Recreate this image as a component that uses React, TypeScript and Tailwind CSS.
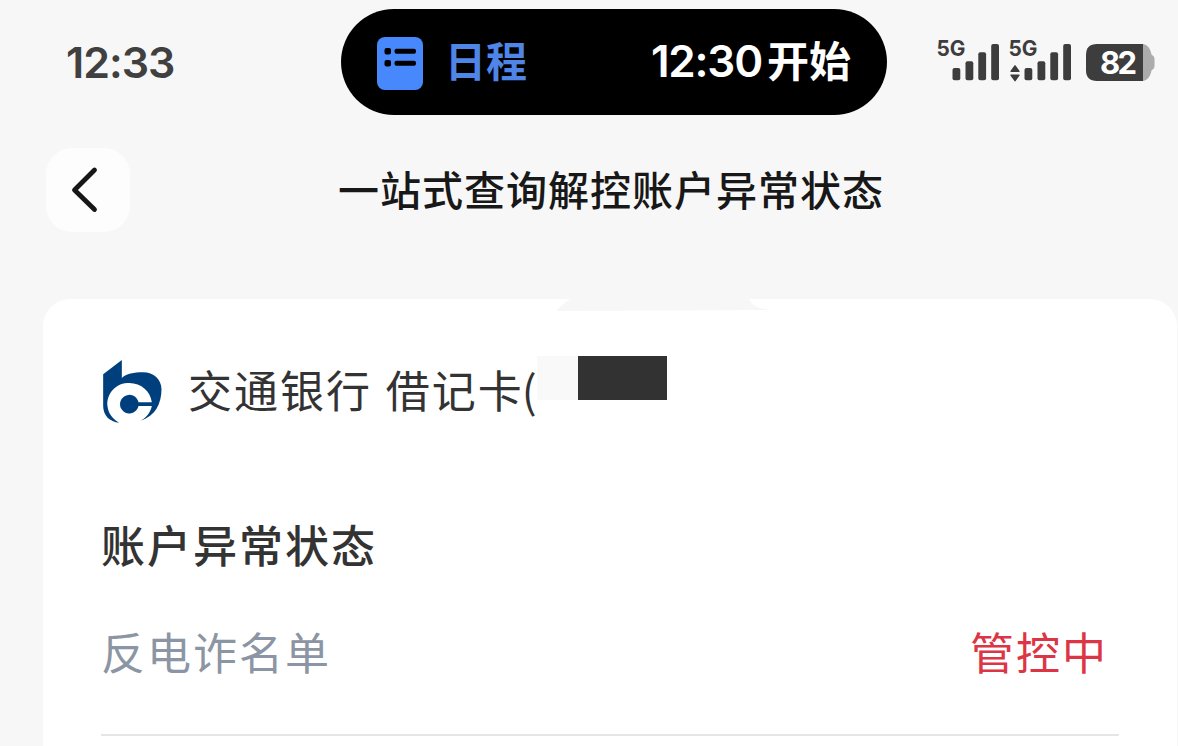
import React from 'react';

const BackIcon: React.FC<{ className?: string }> = ({ className }) => (
  <svg viewBox="0 0 84 84" fill="none" stroke="currentColor" className={className}>
    <path strokeWidth="4.8" strokeLinecap="round" strokeLinejoin="round" d="M48.5 22L28.5 42L48.5 61.5" />
  </svg>
);

const ScheduleIcon: React.FC<{ className?: string }> = ({ className }) => (
  <svg viewBox="0 0 46 53" className={className}>
    <rect width="46" height="53" rx="8" fill="#4888fd" />
    <g fill="#000">
      <rect x="7.5" y="11" width="6.5" height="6.5" rx="2" />
      <rect x="17.5" y="11.8" width="21.5" height="5" rx="2" />
      <rect x="7.5" y="23" width="6.5" height="6.5" rx="2" />
      <rect x="17.5" y="23.8" width="21.5" height="5" rx="2" />
    </g>
  </svg>
);

const SignalIcon: React.FC<{ className?: string; data?: boolean }> = ({ className, data }) => (
  <svg viewBox="-2 -10 66 54" fill="#3d3d3d" className={className}>
    <text x="-0.5" y="18" fontSize="21.5" fontWeight="700" textLength="29" lengthAdjust="spacingAndGlyphs" className="font-['Inter',sans-serif]">5G</text>
    {data && (
      <g stroke="#3d3d3d" strokeWidth="1.4" strokeLinejoin="round">
        <path d="M2 33.3L6 27.8L10 33.3Z" />
        <path d="M2 37.2L6 42.7L10 37.2Z" />
      </g>
    )}
    <rect x="15.5" y="30" width="7.8" height="12.3" rx="2" />
    <rect x="28.5" y="23.2" width="7.8" height="19.1" rx="2" />
    <rect x="41.3" y="14.2" width="7.8" height="28.1" rx="2" />
    <rect x="54.2" y="6" width="7.8" height="36.3" rx="2" />
  </svg>
);

const BatteryIcon: React.FC<{ className?: string }> = ({ className }) => (
  <svg viewBox="0 0 70 37" className={className}>
    <path d="M57 0C62 1 64.500 5 65.500 10.500L67.800 12.500Q68.500 13.500 68.500 15V22Q68.500 23.500 67.800 24.500L65.500 26.500C64.500 32 62 36 57 37Z" fill="#acacac" />
    <path d="M11 0H57V37H11Q0 37 0 26V11Q0 0 11 0Z" fill="#3d3d3d" />
    <text x="14" y="29.500" fontSize="31" fontWeight="700" fill="#fff" textLength="37" className="font-['Inter',sans-serif]">82</text>
  </svg>
);

const BankLogo: React.FC<{ className?: string }> = ({ className }) => (
  <svg viewBox="40 45 176 189" fill="#003f7d" className={className}>
    <path d="M96 45L40 88V182C40 212 60 230 88 233C68 222 56 206 53 184C49 152 72 117 112 114C152 111 182 138 186 172H146A28 28 0 1 0 146 183H186C182 201 172 216 153 227C196 214 215 176 215 133C215 103 191 82 160 82C132 82 109 86 96 99Z" />
  </svg>
);

const StatusBar: React.FC = () => (
  <div className="flex h-[124px] items-start">
    <span className="mt-[34px] ml-[66px] w-[275px] font-['Inter',sans-serif] text-[43px] leading-[56px] font-semibold tracking-[-1px] text-[#404040]">12:33</span>
    <div className="mt-[9px] flex h-[106px] w-[546px] items-center rounded-full bg-black pr-[36px] pl-[36px]">
      <ScheduleIcon className="mt-[2px] h-[53px] w-[46px]" />
      <span className="mb-[5px] ml-[22px] text-[41px] leading-none font-bold text-[#5085e8]">日程</span>
      <span className="ml-auto flex items-center text-white">
        <span className="mb-[2px] font-['Inter',sans-serif] text-[44px] leading-none font-semibold tracking-[-1.200px]">12:30</span>
        <span className="mb-[6px] ml-[5px] text-[42px] leading-none font-bold">开始</span>
      </span>
    </div>
    <div className="mt-[28px] ml-[48px] flex items-start">
      <SignalIcon className="h-[54px] w-[66px]" />
      <SignalIcon className="ml-[6px] h-[54px] w-[66px]" data />
      <BatteryIcon className="mt-[16px] ml-[13px] h-[37px] w-[70px]" />
    </div>
  </div>
);

const App: React.FC = () => (
  <div className="flex h-[746px] w-[1178px] flex-col overflow-hidden bg-[#f7f7f7] font-['Noto_Sans_CJK_SC',sans-serif]">
    <StatusBar />

    <header className="flex h-[175px] items-start">
      <button className="mt-[24px] ml-[46px] rounded-[26px] bg-[#fdfdfd] text-[#171717]">
        <BackIcon className="h-[84px] w-[84px]" />
      </button>
      <h1 className="mt-[34px] ml-[208px] text-[41px] leading-[60px] font-medium tracking-[1px] text-[#181818]">一站式查询解控账户异常状态</h1>
    </header>

    <main className="ml-[43px] flex w-[1134px] flex-1 flex-col rounded-t-[27px] bg-white pr-[58px] pl-[58px]">
      <svg viewBox="0 0 220 12" className="ml-[455px] h-[12px] w-[220px] shrink-0">
        <path d="M14 0H193C197 7 202 10 216 11L0 12Q6 5 14 0Z" fill="#f7f7f7" />
      </svg>

      <div className="mt-[45px] flex h-[70px] items-start">
        <BankLogo className="mt-[4px] ml-[2px] h-[63px] w-[59px]" />
        <span className="relative z-10 mt-[1px] ml-[26px] w-[349px] text-[44px] leading-[64px] tracking-[2px] whitespace-nowrap text-[#333] [word-spacing:2px]">
          交通银行 借记卡<span className="-ml-[2px]">(</span>
        </span>
        <span className="h-[44px] w-[41px] bg-[#f9f9f9]" />
        <span className="h-[44px] w-[89px] bg-[#323232]" />
      </div>

      <h2 className="mt-[86px] text-[44px] leading-[64px] font-medium tracking-[2px] text-[#333]">账户异常状态</h2>

      <div className="mt-[43px] flex h-[117px] shrink-0 items-start justify-between border-b-2 border-[#e6e6e6] pr-[11px] text-[44px] leading-[64px] tracking-[2px]">
        <span className="text-[#8b95a3]">反电诈名单</span>
        <span className="text-[#dc3545]">管控中</span>
      </div>
    </main>
  </div>
);

export default App;
